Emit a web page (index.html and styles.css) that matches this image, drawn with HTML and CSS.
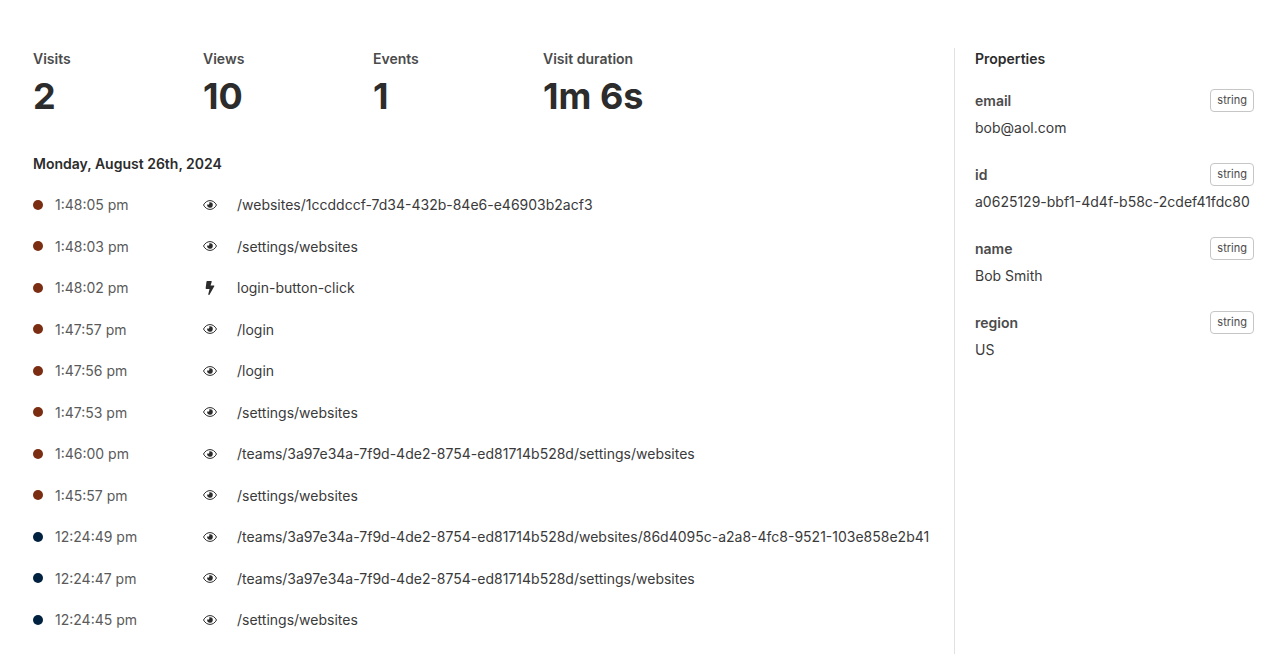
FILE: index.html
```html
<!DOCTYPE html>
<html lang="en">
<head>
<meta charset="utf-8">
<title>Session activity</title>
<link rel="stylesheet" href="styles.css">
</head>
<body>
<svg class="sprite" aria-hidden="true">
  <symbol id="eye" viewBox="0 0 14 14"><path d="M.5 7C2 4.200 4.300 2.600 7 2.600S12 4.200 13.500 7C12 9.800 9.700 11.400 7 11.400S2 9.800.5 7z" fill="none" stroke="currentColor" stroke-width="1"/><path d="M7 4.200a2.800 2.800 0 1 1-2.700 2.100 1.100 1.100 0 0 0 1.700-1.800A2.800 2.800 0 0 1 7 4.200z"/></symbol>
  <symbol id="bolt" viewBox="0 0 320 512"><path d="M296 160H180.600l42.600-129.800C227.200 15 215.700 0 200 0H56C44 0 33.800 8.900 32.200 20.800l-32 240C-1.700 275.200 9.500 288 24 288h118.700L96.600 482.500c-3.600 15.200 8 29.500 23.300 29.500 8.400 0 16.400-4.400 20.800-12l176-304c9.300-15.900-2.200-36-20.700-36z"/></symbol>
</svg>
<main class="page">
  <section class="main">
    <dl class="stats">
      <div><dt>Visits</dt><dd>2</dd></div>
      <div><dt>Views</dt><dd>10</dd></div>
      <div><dt>Events</dt><dd>1</dd></div>
      <div><dt>Visit duration</dt><dd>1m 6s</dd></div>
    </dl>
    <h2 class="date">Monday, August 26th, 2024</h2>
    <ul class="timeline">
      <li><i class="dot"></i><time>1:48:05 pm</time><svg class="icon"><use href="#eye"/></svg><span>/websites/1ccddccf-7d34-432b-84e6-e46903b2acf3</span></li>
      <li><i class="dot"></i><time>1:48:03 pm</time><svg class="icon"><use href="#eye"/></svg><span>/settings/websites</span></li>
      <li><i class="dot"></i><time>1:48:02 pm</time><svg class="icon"><use href="#bolt"/></svg><span>login-button-click</span></li>
      <li><i class="dot"></i><time>1:47:57 pm</time><svg class="icon"><use href="#eye"/></svg><span>/login</span></li>
      <li><i class="dot"></i><time>1:47:56 pm</time><svg class="icon"><use href="#eye"/></svg><span>/login</span></li>
      <li><i class="dot"></i><time>1:47:53 pm</time><svg class="icon"><use href="#eye"/></svg><span>/settings/websites</span></li>
      <li><i class="dot"></i><time>1:46:00 pm</time><svg class="icon"><use href="#eye"/></svg><span>/teams/3a97e34a-7f9d-4de2-8754-ed81714b528d/settings/websites</span></li>
      <li><i class="dot"></i><time>1:45:57 pm</time><svg class="icon"><use href="#eye"/></svg><span>/settings/websites</span></li>
      <li><i class="dot navy"></i><time>12:24:49 pm</time><svg class="icon"><use href="#eye"/></svg><span>/teams/3a97e34a-7f9d-4de2-8754-ed81714b528d/websites/86d4095c-a2a8-4fc8-9521-103e858e2b41</span></li>
      <li><i class="dot navy"></i><time>12:24:47 pm</time><svg class="icon"><use href="#eye"/></svg><span>/teams/3a97e34a-7f9d-4de2-8754-ed81714b528d/settings/websites</span></li>
      <li><i class="dot navy"></i><time>12:24:45 pm</time><svg class="icon"><use href="#eye"/></svg><span>/settings/websites</span></li>
    </ul>
  </section>
  <aside class="properties">
    <h2>Properties</h2>
    <dl>
      <div><dt>email<span class="tag">string</span></dt><dd>bob@aol.com</dd></div>
      <div><dt>id<span class="tag">string</span></dt><dd>a0625129-bbf1-4d4f-b58c-2cdef41fdc80</dd></div>
      <div><dt>name<span class="tag">string</span></dt><dd>Bob Smith</dd></div>
      <div><dt>region<span class="tag">string</span></dt><dd>US</dd></div>
    </dl>
  </aside>
</main>
</body>
</html>
```
FILE: styles.css
```css
* { box-sizing: border-box; margin: 0; padding: 0; }
body { background: #fff; color: #2c2c2c; font: 14px/22px Inter, sans-serif; }
.sprite { position: absolute; width: 0; height: 0; }
.page { display: flex; gap: 20px; min-height: 100vh; padding: 48px 33px 0; }
.main { display: flex; flex: 1; flex-direction: column; min-width: 0; padding-bottom: 24px; }
.stats { display: grid; grid-template-columns: repeat(3, 170px) auto; }
.stats dt { font-weight: 600; color: #4b4b4b; }
.stats dd { font-size: 36px; line-height: 52px; font-weight: 700; }
.date { margin-top: 31px; font-size: 14px; font-weight: 600; }
.timeline { display: flex; flex: 1; flex-direction: column; justify-content: space-between; gap: 16px; margin-top: 19px; list-style: none; }
.timeline li { display: grid; grid-template-columns: 22px 148px 34px 1fr; align-items: center; line-height: 21px; white-space: nowrap; }
.timeline time { color: #5a5a5a; }
.timeline span { color: #3a3a3a; }
.dot { width: 10px; height: 10px; border-radius: 50%; background: #7b2d12; }
.dot.navy { background: #00213f; }
.icon { width: 14px; height: 14px; fill: currentColor; }
.properties { width: 300px; padding-left: 20px; border-left: 1px solid #e1e1e1; }
.properties h2 { font-size: 14px; font-weight: 600; }
.properties dl { display: grid; gap: 20px; margin-top: 18px; }
.properties dt { display: flex; align-items: center; justify-content: space-between; height: 25px; font-weight: 600; color: #4b4b4b; }
.properties dd { line-height: 29px; color: #3a3a3a; white-space: nowrap; }
.tag { padding: 0 6px; border: 1px solid #c6c6c6; border-radius: 4px; font-size: 11px; line-height: 21px; font-weight: 400; }
```
